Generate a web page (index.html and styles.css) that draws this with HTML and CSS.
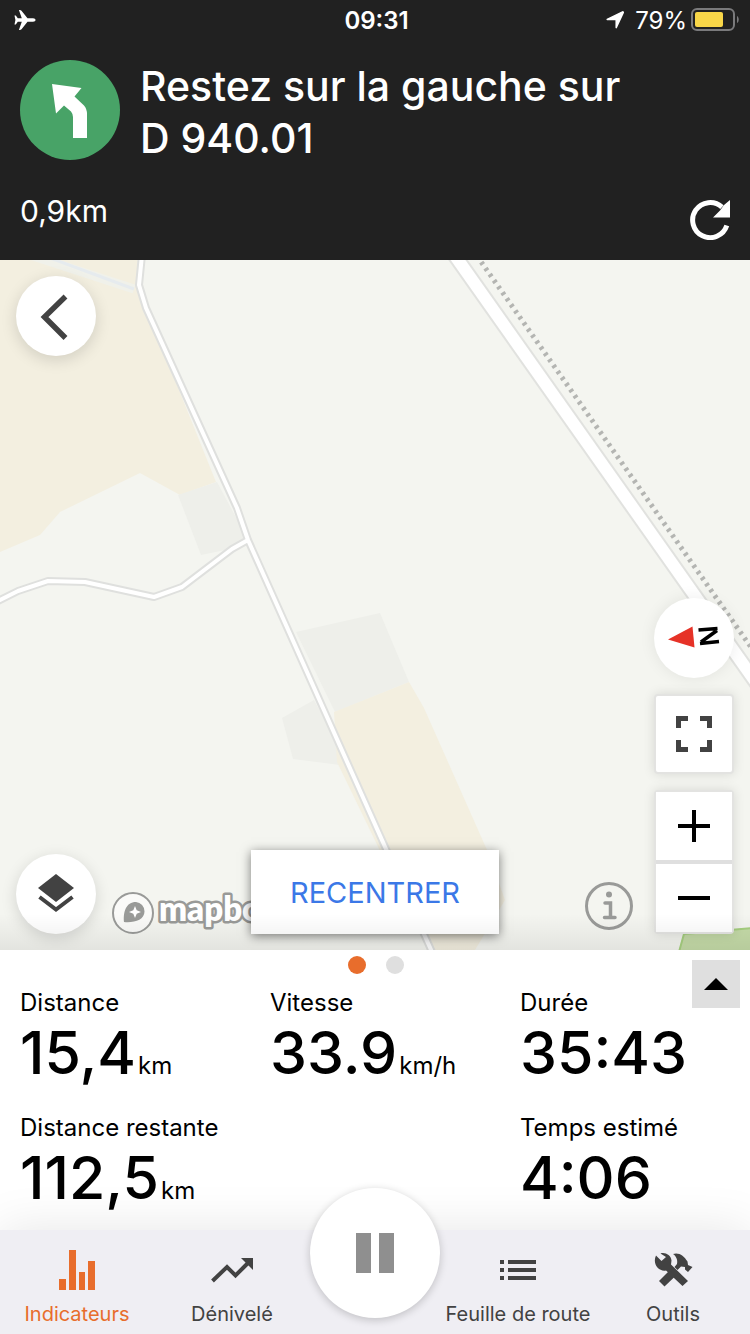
FILE: index.html
```html
<!DOCTYPE html>
<html lang="fr">
<head>
<meta charset="utf-8">
<meta name="viewport" content="width=device-width, initial-scale=1">
<title>Navigation</title>
<link rel="stylesheet" href="styles.css">
</head>
<body>
<div class="app">
  <header class="guidance">
    <div class="status">
      <div class="status-side">
        <svg class="plane" viewBox="0 0 21 20" aria-label="Mode avion"><path d="M21 10c0-1-1-1.700-2.500-1.700h-5.500L7 .8C6.600.3 6 0 5.200 0h-.8l2.900 8.300H3.300L1.300 5.400H0L.9 10 0 14.600h1.300l2-2.900h4L4.400 20h.8c.8 0 1.400-.3 1.800-.8l6-7.500h5.500c1.500 0 2.500-.7 2.500-1.700z" fill="#fff"/></svg>
      </div>
      <time class="clock">09:31</time>
      <div class="status-side status-end">
        <svg class="locate" viewBox="0 0 18 18" aria-label="Localisation"><path d="M17.400 1.200 10.200 16.600V8.400H1.200L16.600.8Z" fill="#fff" stroke="#fff" stroke-width="1.500" stroke-linejoin="round"/></svg>
        <span class="charge">79%</span>
        <svg class="battery" viewBox="0 0 48 24" aria-label="Batterie"><rect x="1" y="1" width="42" height="21" rx="5" fill="none" stroke="#7a7a7c" stroke-width="2"/><rect x="4" y="4" width="28" height="15" rx="2" fill="#f8d648"/><path d="M46 8c2.300 1 2.300 6 0 7z" fill="#7a7a7c"/></svg>
      </div>
    </div>
    <div class="step">
      <span class="turn">
        <svg viewBox="0 0 100 100" aria-hidden="true"><path d="M32 24 61.500 28 54.500 36.500 64 45.500Q67 49 67 54V78H53V57Q53 54 51 51.500L44 45.500 36 53.500Z" fill="#fff"/></svg>
      </span>
      <h1 class="instruction">Restez sur la gauche sur D&nbsp;940.01</h1>
    </div>
    <div class="step-foot">
      <span class="remaining">0,9km</span>
      <button class="refresh" type="button" aria-label="Recalculer">
        <svg viewBox="0 0 40 40" aria-hidden="true"><path d="M36.800 25.500A17.500 17.500 0 1 1 32 7.200" fill="none" stroke="#fff" stroke-width="5"/><path d="M40 0V17.500H23L30 10.500 34 5Z" fill="#fff"/></svg>
      </button>
    </div>
  </header>

  <main class="map">
    <svg class="map-canvas" viewBox="0 0 750 690" preserveAspectRatio="xMidYMid slice" aria-hidden="true">
      <rect width="750" height="690" fill="#f4f5f0"/>
      <path d="M0 0H139L140 26 146 48 216 222 180 235 140 213 60 252 40 275 0 292Z" fill="#f3efe0"/>
      <path d="M30-5 134 29" fill="none" stroke="#f0f1ea" stroke-width="9"/>
      <path d="M42-5 134 29" fill="none" stroke="#e6ebee" stroke-width="3"/>
      <path d="M178 235 217 222 247 278 235 288 201 295Z" fill="#eeefea"/>
      <path d="M296 372 380 353 409 422 335 452Z" fill="#eeefea"/>
      <path d="M282 458 314 440 336 480 340 505 293 499Z" fill="#eeefea"/>
      <path d="M334 452 409 422 424 448 487 590 505 640 475 690H428L337 502Z" fill="#f3efe0"/>
      <path d="M684 673 750 668V690H679Z" fill="#c5dba8"/>
      <path d="M679 692 684 674 752 668" fill="none" stroke="#a7d080" stroke-width="2"/>
      <g fill="none" stroke-linejoin="round">
        <path d="M-4 342 18 331 48 321 85 322 154 337 182 327 232 289 248 280M142-5 139 25 146 48 237 248 248 280 432 692" stroke="#dfe0de" stroke-width="8"/>
        <path d="M-4 342 18 331 48 321 85 322 154 337 182 327 232 289 248 280M142-5 139 25 146 48 237 248 248 280 432 692" stroke="#fff" stroke-width="4"/>
        <path d="M451-10 760 428" stroke="#e1e2df" stroke-width="16"/>
        <path d="M451-10 760 428" stroke="#fff" stroke-width="12"/>
        <path d="M477-4 722 346 760 400" stroke="#b4b5b2" stroke-width="5" stroke-dasharray="3 4.400"/>
      </g>
    </svg>

    <button class="round back" type="button" aria-label="Retour">
      <svg viewBox="0 0 80 80" aria-hidden="true"><path d="M49.500 20.500 28.500 41 49.500 62" fill="none" stroke="#424242" stroke-width="5.500"/></svg>
    </button>

    <div class="map-tools">
      <button class="round compass" type="button" aria-label="Nord">
        <svg viewBox="0 0 80 80" aria-hidden="true"><path d="M14 41.500 38.500 28.500 40.500 49.500Z" fill="#e63227"/><path d="M44.500 32 63.500 30.500M47 44 63 32.500M46 45.500 65 43.500" fill="none" stroke="#000" stroke-width="3.500"/></svg>
      </button>
      <button class="square" type="button" aria-label="Plein écran">
        <svg viewBox="0 0 36 36" aria-hidden="true"><path d="M2.500 12V2.500H12M24 2.500H33.500V12M33.500 24V33.500H24M12 33.500H2.500V24" fill="none" stroke="#424242" stroke-width="5"/></svg>
      </button>
      <div class="zoom">
        <button type="button" aria-label="Zoomer"><svg viewBox="0 0 32 32" aria-hidden="true"><path d="M0 16H32M16 0V32" stroke="#000" stroke-width="4"/></svg></button>
        <button type="button" aria-label="Dézoomer"><svg viewBox="0 0 32 32" aria-hidden="true"><path d="M0 16H32" stroke="#000" stroke-width="4"/></svg></button>
      </div>
    </div>

    <button class="round layers" type="button" aria-label="Couches">
      <svg viewBox="0 0 80 80" aria-hidden="true"><path d="M40 20 58 34 40 48 22 34Z" fill="#424242"/><path d="M23.500 43 40 55.500 56.500 43" fill="none" stroke="#424242" stroke-width="4"/></svg>
    </button>

    <a class="brand" href="#mapbox" aria-label="mapbox">
      <svg viewBox="0 0 180 48" aria-hidden="true">
        <circle cx="21" cy="24" r="20" fill="#fafaf8" stroke="#999a98" stroke-width="2"/>
        <path d="M12 33C11 23 14 13 24 13a9.500 9.500 0 0 1 8.500 9.500C32.500 31 22 34 12 33Z" fill="#999a98"/>
        <path d="M23 17 24.700 21.300 29 23 24.700 24.700 23 29 21.300 24.700 17 23 21.300 21.300Z" fill="#fff"/>
        <text class="wordmark" x="47" y="32">mapbox</text>
      </svg>
    </a>

    <button class="recenter" type="button">RECENTRER</button>

    <button class="info" type="button" aria-label="Informations">
      <svg viewBox="0 0 48 48" aria-hidden="true"><circle cx="24" cy="24" r="22.500" fill="none" stroke="#999a98" stroke-width="3"/><circle cx="24" cy="12.500" r="3" fill="#999a98"/><path d="M20 21H25.500V35.500M19.500 35.500H30" fill="none" stroke="#999a98" stroke-width="3.500" stroke-linecap="round"/></svg>
    </button>
  </main>

  <section class="metrics">
    <div class="dots"><span class="dot dot-on"></span><span class="dot"></span></div>
    <button class="expand" type="button" aria-label="Agrandir"><svg viewBox="0 0 24 12" aria-hidden="true"><path d="M0 12 12 0 24 12Z"/></svg></button>
    <dl class="grid">
      <div class="metric"><dt>Distance</dt><dd>15,4<small>km</small></dd></div>
      <div class="metric"><dt>Vitesse</dt><dd>33.9<small>km/h</small></dd></div>
      <div class="metric"><dt>Durée</dt><dd>35:43</dd></div>
      <div class="metric wide"><dt>Distance restante</dt><dd>112,5<small>km</small></dd></div>
      <div class="metric"><dt>Temps estimé</dt><dd>4:06</dd></div>
    </dl>
  </section>

  <nav class="tabs">
    <button class="tab tab-on" type="button">
      <svg viewBox="0 0 44 44" aria-hidden="true"><path d="M4 31h7v11H4zM14 2h7v40h-7zM24 24h6v18h-6zM33 13h7v29h-7z" fill="currentColor"/></svg>
      Indicateurs
    </button>
    <button class="tab" type="button">
      <svg viewBox="0 0 44 44" aria-hidden="true"><path d="M2.500 33 17 19 25.500 27.500 38 15" fill="none" stroke="currentColor" stroke-width="4"/><path d="M31 10H43V22Z" fill="currentColor"/></svg>
      Dénivelé
    </button>
    <button class="pause" type="button" aria-label="Pause"><svg viewBox="0 0 38 40" aria-hidden="true"><path d="M0 0h15v40H0zM23 0h15v40H23z" fill="#8f8f8f"/></svg></button>
    <button class="tab" type="button">
      <svg viewBox="0 0 44 44" aria-hidden="true"><path d="M4 12h4v4H4zM12 12h28v4H12zM4 20h4v4H4zM12 20h28v4H12zM4 28h4v4H4zM12 28h28v4H12z" fill="currentColor"/></svg>
      Feuille de route
    </button>
    <button class="tab" type="button">
      <svg viewBox="0 0 44 44" aria-hidden="true"><path d="M5 7.500 10.500 13 15 9 9.500 5.500C14 4 20 7 20.500 12.500L20 16.500 37 33 31.500 38 15 22.500C8 24 1 16 5 7.500Z" fill="currentColor"/><path d="M18.500 22.500 24.500 28 13.500 38.500 8 33Z" fill="currentColor"/><path d="M22 6C28 4 33 8 36.500 13.500L37 17 41.500 19 37 24 34 21.500V19L30 18.500 26.500 22 23.500 19 26 16C27 12 25 8 22 6Z" fill="currentColor"/></svg>
      Outils
    </button>
  </nav>
</div>
</body>
</html>
```
FILE: styles.css
```css
* { box-sizing: border-box; }

body {
  margin: 0;
  font-family: Inter, "Liberation Sans", sans-serif;
  color: #000;
  background: #fff;
}

button {
  padding: 0;
  border: 0;
  background: #fff;
  font: inherit;
  color: inherit;
}

svg { display: block; }
dl, dd, h1 { margin: 0; }

.app {
  display: flex;
  flex-direction: column;
  min-height: 100vh;
}

/* Guidance header */
.guidance {
  background: #212121;
  color: #fff;
  padding: 0 20px 20px;
}
.status {
  display: flex;
  align-items: center;
  height: 40px;
  margin: 0 -9px 0 -6px;
}
.status-side {
  display: flex;
  flex: 1;
  align-items: center;
}
.status-end { justify-content: flex-end; }
.plane { width: 22px; height: 20px; }
.clock { font-size: 24px; font-weight: 600; }
.locate { width: 18px; height: 18px; margin-right: 11px; }
.charge { font-size: 24px; margin-right: 4px; }
.battery { width: 48px; height: 24px; }

.step {
  display: flex;
  gap: 20px;
  padding-top: 20px;
}
.turn {
  flex: none;
  width: 100px;
  height: 100px;
  border-radius: 50%;
  background: #48a367;
}
.instruction {
  max-width: 540px;
  font-size: 41px;
  font-weight: 500;
  line-height: 52px;
}
.step-foot {
  display: flex;
  justify-content: space-between;
  align-items: flex-end;
  height: 76px;
}
.remaining {
  font-size: 30px;
  line-height: 58px;
}
.refresh { background: none; }
.refresh svg { width: 40px; height: 40px; }

/* Map */
.map {
  position: relative;
  flex: 1;
  min-height: 690px;
  overflow: hidden;
  background: #f4f5f0;
}
.map::after {
  content: "";
  position: absolute;
  inset: auto 0 0;
  height: 36px;
  background: linear-gradient(transparent, rgba(0, 0, 0, .07));
  pointer-events: none;
}
.map-canvas {
  position: absolute;
  width: 100%;
  height: 100%;
}
.round {
  width: 80px;
  height: 80px;
  border-radius: 50%;
  box-shadow: 0 4px 16px rgba(0, 0, 0, .14);
}
.back { position: absolute; top: 16px; left: 16px; }
.layers { position: absolute; bottom: 16px; left: 16px; }
.map-tools {
  position: absolute;
  right: 16px;
  bottom: 16px;
  display: flex;
  flex-direction: column;
  align-items: center;
  gap: 16px;
}
.compass { box-shadow: 0 0 16px rgba(0, 0, 0, .08); }
.square, .zoom {
  width: 80px;
  border: 2px solid #e3e3e1;
  border-radius: 4px;
  box-shadow: 0 0 12px rgba(0, 0, 0, .12);
}
.square {
  display: grid;
  place-items: center;
  height: 80px;
}
.square svg { width: 36px; height: 36px; }
.zoom {
  display: flex;
  flex-direction: column;
  gap: 4px;
  background: #dfdfdf;
}
.zoom button {
  display: grid;
  place-items: center;
  height: 68px;
}
.zoom svg { width: 32px; height: 32px; }
.brand { position: absolute; left: 112px; bottom: 13px; }
.brand svg { width: 180px; height: 48px; }
.wordmark {
  font: 800 33px Lato, sans-serif;
  fill: #fff;
  stroke: #999a98;
  stroke-width: 5px;
  stroke-linejoin: round;
  paint-order: stroke;
}
.recenter {
  position: absolute;
  bottom: 16px;
  left: 50%;
  width: 248px;
  height: 84px;
  margin-left: -124px;
  color: #3b78e7;
  font-size: 29px;
  box-shadow: 0 2px 10px rgba(0, 0, 0, .5);
}
.info {
  position: absolute;
  right: 117px;
  bottom: 20px;
  background: none;
}
.info svg { width: 48px; height: 48px; }

/* Metrics */
.metrics {
  position: relative;
  padding: 6px 0 17px 20px;
  background: #fff;
}
.dots {
  display: flex;
  justify-content: center;
  gap: 20px;
  padding-right: 18px;
}
.dot {
  width: 18px;
  height: 18px;
  border-radius: 50%;
  background: #dfdfdf;
}
.dot-on { background: #e86d2c; }
.expand {
  position: absolute;
  top: 10px;
  right: 10px;
  display: grid;
  place-items: center;
  width: 48px;
  height: 48px;
  background: #dfdfdf;
}
.expand svg { width: 24px; height: 12px; }
.grid {
  display: grid;
  grid-template-columns: 250fr 250fr 230fr;
  row-gap: 25px;
  padding-top: 14px;
}
.wide { grid-column: span 2; }
.metric dt { font-size: 24px; line-height: 30px; }
.metric dd {
  font-size: 59px;
  font-weight: 500;
  line-height: 70px;
}
.metric small {
  margin-left: 2px;
  font-size: 24px;
  font-weight: 400;
  line-height: 24px;
}

/* Tab bar */
.tabs {
  position: relative;
  display: grid;
  grid-template-columns: 154fr 156fr 130fr 156fr 154fr;
  height: 104px;
  background: #efeef3;
  box-shadow: 0 0 50px rgba(0, 0, 0, .1);
}
.tab {
  display: flex;
  flex-direction: column;
  align-items: center;
  gap: 12px;
  padding-top: 18px;
  background: none;
  color: #424242;
  font-size: 20px;
  line-height: 20px;
  white-space: nowrap;
}
.tab svg { width: 44px; height: 44px; }
.tab-on { color: #e86d2c; }
.pause {
  display: grid;
  place-items: center;
  width: 130px;
  height: 130px;
  margin-top: -42px;
  border-radius: 50%;
  box-shadow: 0 2px 8px rgba(0, 0, 0, .2);
}
.pause svg { width: 38px; height: 40px; }
```
